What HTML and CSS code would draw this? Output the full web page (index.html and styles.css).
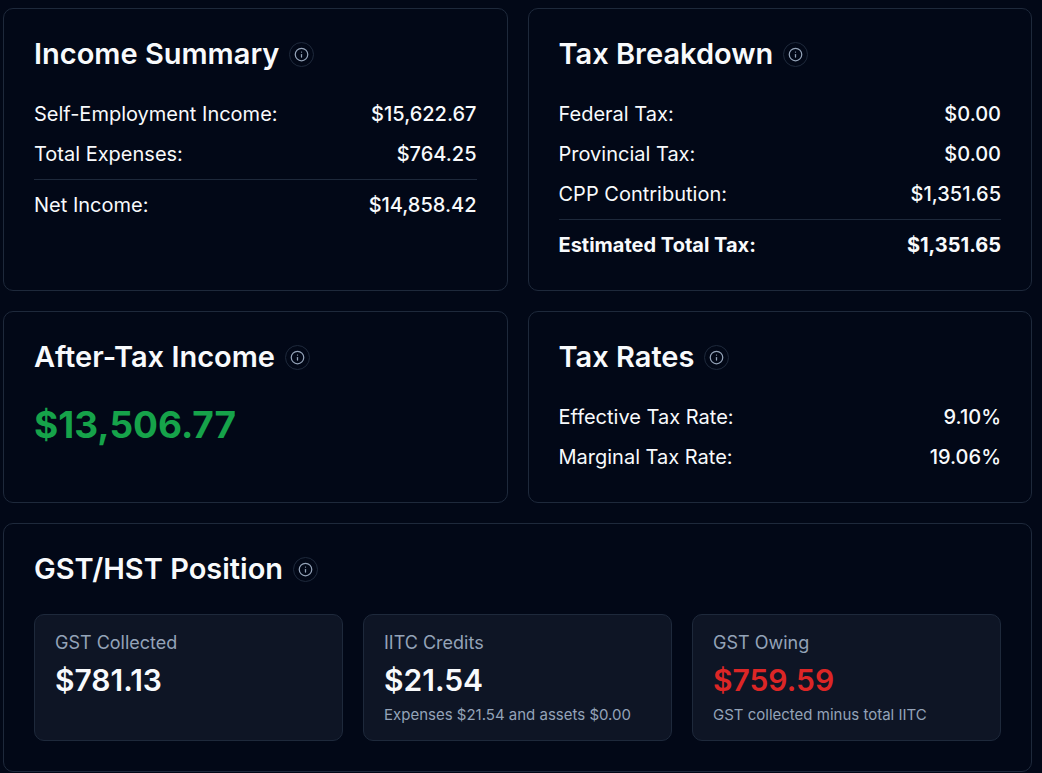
FILE: index.html
```
<!DOCTYPE html>
<html lang="en">
<head>
    <meta charset="UTF-8">
    <meta name="viewport" content="width=device-width, initial-scale=1.0">
    <title>Tax Summary</title>
    <link rel="stylesheet" href="styles.css">
</head>
<body>
    <svg class="sprite" aria-hidden="true">
        <symbol id="info" viewBox="0 0 24 24">
            <circle cx="12" cy="12" r="10"/>
            <path d="M12 16v-4"/>
            <path d="M12 8h.01"/>
        </symbol>
    </svg>
    <main class="summary">
        <section class="card">
            <div class="card-header">
                <h2>Income Summary</h2>
                <button class="info" type="button" aria-label="About income summary"><svg><use href="#info"/></svg></button>
            </div>
            <dl class="rows">
                <div class="row"><dt>Self-Employment Income:</dt><dd>$15,622.67</dd></div>
                <div class="row"><dt>Total Expenses:</dt><dd>$764.25</dd></div>
                <div class="row divided"><dt>Net Income:</dt><dd>$14,858.42</dd></div>
            </dl>
        </section>

        <section class="card">
            <div class="card-header">
                <h2>Tax Breakdown</h2>
                <button class="info" type="button" aria-label="About tax breakdown"><svg><use href="#info"/></svg></button>
            </div>
            <dl class="rows">
                <div class="row"><dt>Federal Tax:</dt><dd>$0.00</dd></div>
                <div class="row"><dt>Provincial Tax:</dt><dd>$0.00</dd></div>
                <div class="row"><dt>CPP Contribution:</dt><dd>$1,351.65</dd></div>
                <div class="row divided total"><dt>Estimated Total Tax:</dt><dd>$1,351.65</dd></div>
            </dl>
        </section>

        <section class="card">
            <div class="card-header">
                <h2>After-Tax Income</h2>
                <button class="info" type="button" aria-label="About after-tax income"><svg><use href="#info"/></svg></button>
            </div>
            <p class="net-amount">$13,506.77</p>
        </section>

        <section class="card">
            <div class="card-header">
                <h2>Tax Rates</h2>
                <button class="info" type="button" aria-label="About tax rates"><svg><use href="#info"/></svg></button>
            </div>
            <dl class="rows">
                <div class="row"><dt>Effective Tax Rate:</dt><dd>9.10%</dd></div>
                <div class="row"><dt>Marginal Tax Rate:</dt><dd>19.06%</dd></div>
            </dl>
        </section>

        <section class="card wide">
            <div class="card-header">
                <h2>GST/HST Position</h2>
                <button class="info" type="button" aria-label="About GST/HST position"><svg><use href="#info"/></svg></button>
            </div>
            <div class="tiles">
                <div class="tile">
                    <p class="tile-label">GST Collected</p>
                    <p class="tile-value">$781.13</p>
                </div>
                <div class="tile">
                    <p class="tile-label">IITC Credits</p>
                    <p class="tile-value">$21.54</p>
                    <p class="tile-note">Expenses $21.54 and assets $0.00</p>
                </div>
                <div class="tile">
                    <p class="tile-label">GST Owing</p>
                    <p class="tile-value owing">$759.59</p>
                    <p class="tile-note">GST collected minus total IITC</p>
                </div>
            </div>
        </section>
    </main>
</body>
</html>
```
FILE: styles.css
```
* {
    box-sizing: border-box;
    margin: 0;
    padding: 0;
}

body {
    background-color: #020817;
    color: #f8fafc;
    font-family: Inter, 'Liberation Sans', sans-serif;
    font-size: 20px;
    line-height: 30px;
}

.sprite {
    display: none;
}

.summary {
    display: grid;
    grid-template-columns: 1fr 1fr;
    gap: 20px;
    padding: 8px 10px 1px 3px;
}

.card {
    border: 1px solid #1e293b;
    border-radius: 10px;
    padding: 30px;
}

.wide {
    grid-column: 1 / -1;
}

.card-header {
    display: flex;
    align-items: center;
    gap: 10px;
    height: 30px;
    margin-bottom: 30px;
}

h2 {
    font-size: 29px;
    font-weight: 600;
}

.info {
    display: flex;
    align-items: center;
    justify-content: center;
    width: 25px;
    height: 25px;
    border: 1px solid #1e293b;
    border-radius: 50%;
    background: none;
    color: #94a3b8;
    cursor: pointer;
}

.info svg {
    width: 15px;
    height: 15px;
    fill: none;
    stroke: currentColor;
    stroke-width: 2;
    stroke-linecap: round;
    stroke-linejoin: round;
}

.rows {
    display: flex;
    flex-direction: column;
    gap: 10px;
}

.row {
    display: flex;
    justify-content: space-between;
}

.row dd {
    font-weight: 500;
}

.divided {
    border-top: 1px solid #1e293b;
    padding-top: 10px;
}

.total dt, .total dd {
    font-weight: 700;
}

.net-amount {
    color: #16a34a;
    font-size: 37px;
    font-weight: 700;
    line-height: 45px;
}

.tiles {
    display: grid;
    grid-template-columns: repeat(3, 1fr);
    gap: 20px;
}

.tile {
    display: flex;
    flex-direction: column;
    gap: 5px;
    background-color: #0e1525;
    border: 1px solid #1e293b;
    border-radius: 10px;
    padding: 15px 20px;
}

.tile-label {
    color: #94a3b8;
    font-size: 18px;
    line-height: 25px;
}

.tile-value {
    font-size: 30px;
    font-weight: 600;
    line-height: 40px;
}

.tile-note {
    color: #94a3b8;
    font-size: 15px;
    line-height: 20px;
}

.owing {
    color: #dc2626;
}
```
